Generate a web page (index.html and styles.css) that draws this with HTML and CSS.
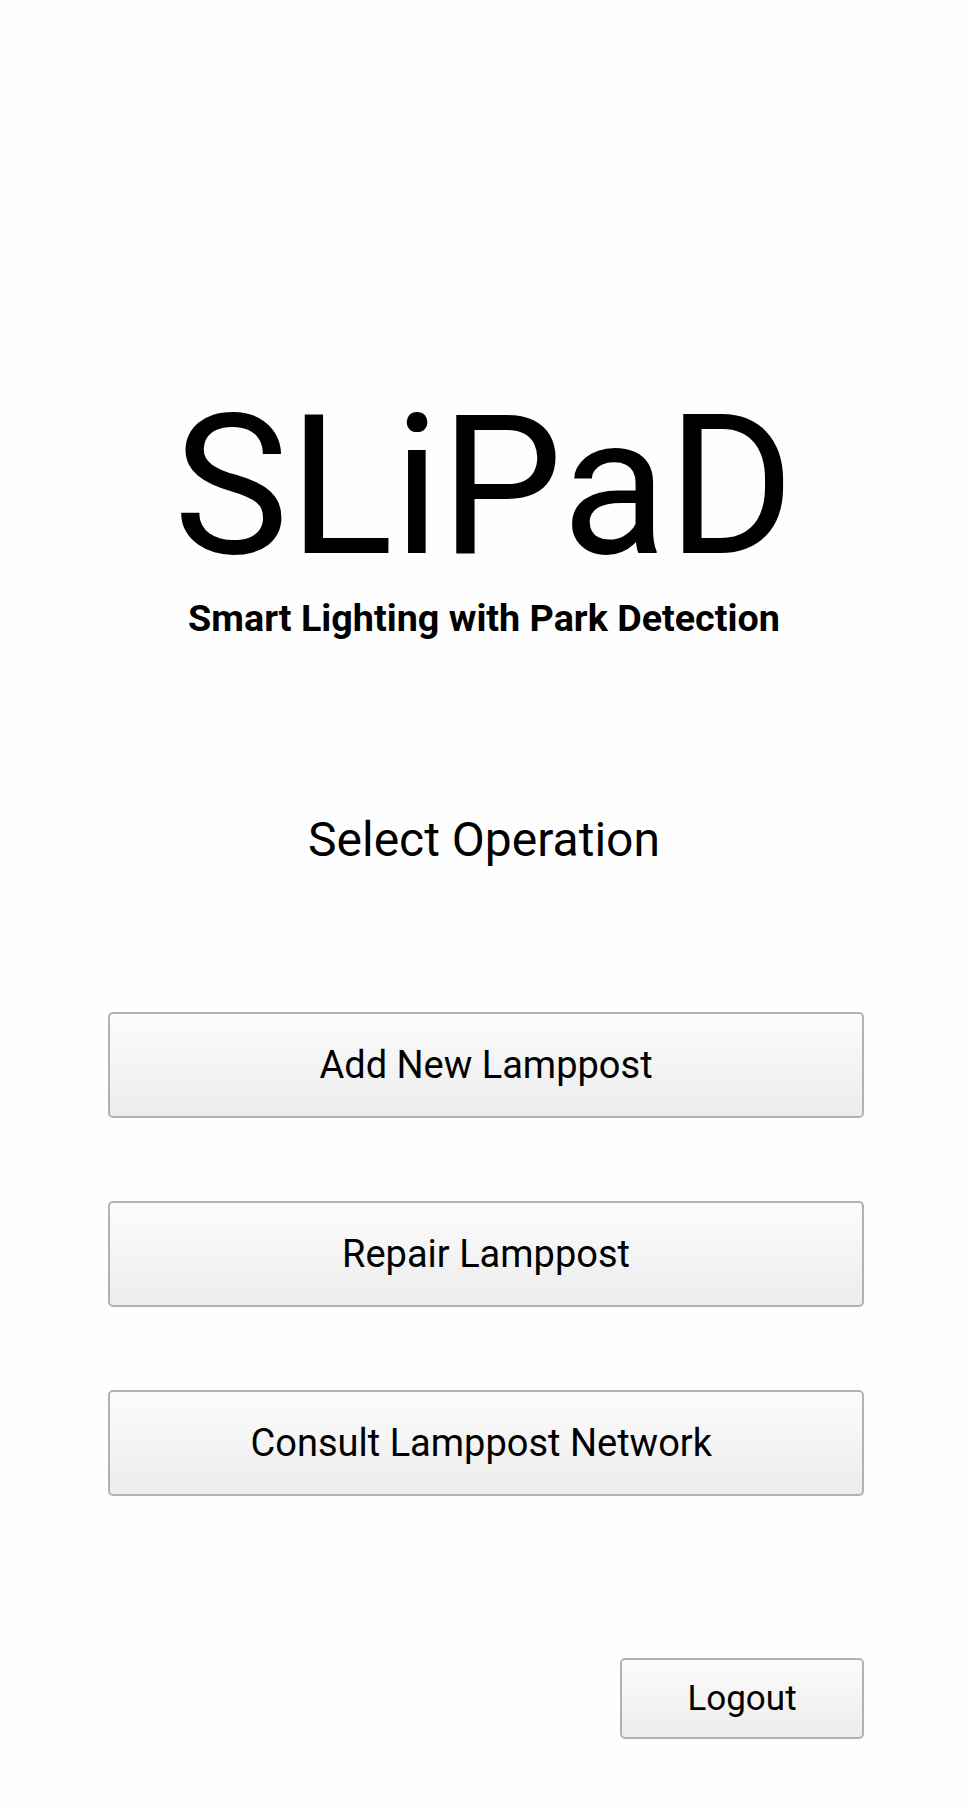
FILE: index.html
```html
<!DOCTYPE html>
<html>
<head>
<meta charset="utf-8">
<link rel="stylesheet" href="styles.css">
</head>
<body>
<main class="screen">
  <h1 class="title">SLiPaD</h1>
  <p class="subtitle">Smart Lighting with Park Detection</p>
  <h2 class="section">Select Operation</h2>
  <div class="ops">
    <button class="btn op">Add New Lamppost</button>
    <button class="btn op">Repair Lamppost</button>
    <button class="btn op">Consult Lamppost Network&nbsp;</button>
  </div>
  <div class="footer">
    <button class="btn logout">Logout</button>
  </div>
</main>
</body>
</html>
```

FILE: styles.css
```css
html, body {
  margin: 0;
  padding: 0;
  background: #fefefe;
}
body {
  font-family: Roboto, "Noto Sans", sans-serif;
  color: #000;
}
.screen {
  width: 968px;
  height: 1813px;
  display: flex;
  flex-direction: column;
  align-items: center;
  box-sizing: border-box;
  padding-top: 390px;
}
.title {
  margin: 0;
  font-size: 194px;
  font-weight: 400;
  line-height: 194px;
  letter-spacing: 0;
}
.subtitle {
  margin: 15px 0 0;
  font-size: 37.7px;
  font-weight: 700;
  line-height: 38px;
}
.section {
  margin: 179px 0 0;
  font-size: 48px;
  font-weight: 400;
  line-height: 48px;
}
.ops {
  margin-top: 148px;
  display: flex;
  flex-direction: column;
  gap: 83px;
  align-self: flex-start;
  margin-left: 108px;
}
.btn {
  font-family: Roboto, "Noto Sans", sans-serif;
  color: #000;
  font-weight: 400;
  border: 2px solid #b2b2b2;
  border-radius: 5px;
  background: linear-gradient(to bottom, #fcfcfc, #ececec);
  padding: 0;
  box-sizing: border-box;
  display: flex;
  align-items: center;
  justify-content: center;
}
.op {
  width: 756px;
  height: 106px;
  font-size: 38px;
}
.footer {
  align-self: stretch;
  display: flex;
  justify-content: flex-end;
  padding-right: 104px;
  margin-top: 162px;
}
.logout {
  width: 244px;
  height: 81px;
  font-size: 35px;
}
```
